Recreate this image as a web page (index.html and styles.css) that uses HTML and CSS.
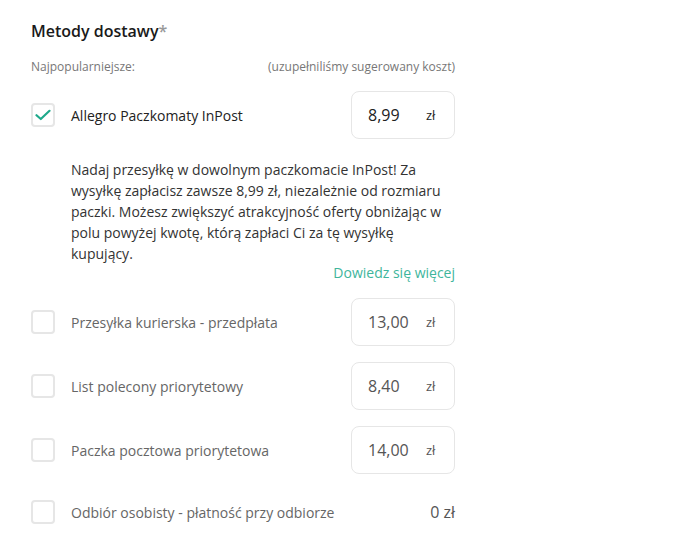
FILE: index.html
```html
<!DOCTYPE html>
<html lang="pl">
<head>
    <meta charset="UTF-8">
    <meta name="viewport" content="width=device-width, initial-scale=1.0">
    <title>Metody dostawy</title>
    <link rel="stylesheet" href="styles.css">
</head>
<body>
    <section class="shipping">
        <h2 class="title">Metody dostawy<span class="required">*</span></h2>
        <div class="subhead">
            <span>Najpopularniejsze:</span>
            <span>(uzupełniliśmy sugerowany koszt)</span>
        </div>

        <div class="option checked">
            <span class="checkbox">
                <svg width="16" height="12" viewBox="0 0 16 12"><path d="M1.5 6.2 L5.8 10 L14.5 1.8" fill="none" stroke="#1fa98b" stroke-width="2.2" stroke-linecap="round" stroke-linejoin="round"/></svg>
            </span>
            <span class="label">Allegro Paczkomaty InPost</span>
            <div class="price"><span class="amount">8,99</span><span class="currency">zł</span></div>
        </div>

        <p class="desc">Nadaj przesyłkę w dowolnym paczkomacie InPost! Za wysyłkę zapłacisz zawsze 8,99 zł, niezależnie od rozmiaru paczki. Możesz zwiększyć atrakcyjność oferty obniżając w polu powyżej kwotę, którą zapłaci Ci za tę wysyłkę kupujący.</p>
        <a class="more" href="#">Dowiedz się więcej</a>

        <div class="option">
            <span class="checkbox"></span>
            <span class="label">Przesyłka kurierska - przedpłata</span>
            <div class="price"><span class="amount">13,00</span><span class="currency">zł</span></div>
        </div>

        <div class="option">
            <span class="checkbox"></span>
            <span class="label">List polecony priorytetowy</span>
            <div class="price"><span class="amount">8,40</span><span class="currency">zł</span></div>
        </div>

        <div class="option">
            <span class="checkbox"></span>
            <span class="label">Paczka pocztowa priorytetowa</span>
            <div class="price"><span class="amount">14,00</span><span class="currency">zł</span></div>
        </div>

        <div class="option pickup">
            <span class="checkbox"></span>
            <span class="label">Odbiór osobisty - płatność przy odbiorze</span>
            <span class="free">0 zł</span>
        </div>
    </section>
</body>
</html>
```

FILE: styles.css
```css
body {
    font-family: 'Open Sans', sans-serif;
    background-color: #fff;
    color: #222;
    margin: 0;
    padding: 0;
}

.shipping {
    width: 424px;
    padding: 20px 0 0 31px;
}

.title {
    margin: 0;
    font-size: 16px;
    font-weight: 600;
    line-height: 22px;
    color: #1a1a1a;
}

.required {
    color: #999;
}

.subhead {
    display: flex;
    justify-content: space-between;
    margin-top: 17px;
    font-size: 12px;
    line-height: 16px;
    color: #777;
}

.option {
    display: flex;
    align-items: center;
    height: 48px;
    margin-top: 16px;
}

.option.pickup {
    margin-top: 14px;
}

.checkbox {
    display: flex;
    align-items: center;
    justify-content: center;
    width: 24px;
    height: 24px;
    border: 2px solid #e6e6e6;
    border-radius: 4px;
    box-sizing: border-box;
    flex-shrink: 0;
}

.label {
    flex: 1;
    margin-left: 16px;
    font-size: 14px;
    color: #666;
}

.checked .label {
    color: #222;
}

.price {
    display: flex;
    align-items: center;
    width: 104px;
    height: 48px;
    box-sizing: border-box;
    border: 1px solid #e6e6e6;
    border-radius: 8px;
    padding-left: 16px;
}

.amount {
    width: 58px;
    font-size: 16px;
    color: #555;
}

.currency {
    font-size: 13px;
    color: #555;
}

.checked .amount,
.checked .currency {
    color: #222;
}

.free {
    font-size: 16px;
    color: #555;
}

.desc {
    margin: 20px 0 0 40px;
    font-size: 14px;
    line-height: 21px;
    color: #333;
}

.more {
    display: block;
    text-align: right;
    font-size: 14px;
    line-height: 18px;
    color: #3eb59c;
    text-decoration: none;
}
```
